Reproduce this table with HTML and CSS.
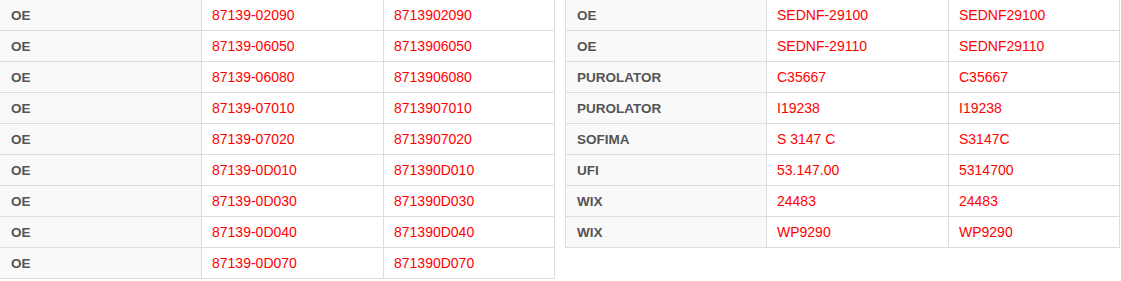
FILE: index.html
```html
<!DOCTYPE html>
<html>
<head>
<meta charset="utf-8">
<link rel="stylesheet" href="styles.css">
</head>
<body>
<div class="wrap">
  <table class="xref">
    <tr><td class="brand">OE</td><td class="num">87139-02090</td><td class="code">8713902090</td></tr>
    <tr><td class="brand">OE</td><td class="num">87139-06050</td><td class="code">8713906050</td></tr>
    <tr><td class="brand">OE</td><td class="num">87139-06080</td><td class="code">8713906080</td></tr>
    <tr><td class="brand">OE</td><td class="num">87139-07010</td><td class="code">8713907010</td></tr>
    <tr><td class="brand">OE</td><td class="num">87139-07020</td><td class="code">8713907020</td></tr>
    <tr><td class="brand">OE</td><td class="num">87139-0D010</td><td class="code">871390D010</td></tr>
    <tr><td class="brand">OE</td><td class="num">87139-0D030</td><td class="code">871390D030</td></tr>
    <tr><td class="brand">OE</td><td class="num">87139-0D040</td><td class="code">871390D040</td></tr>
    <tr><td class="brand">OE</td><td class="num">87139-0D070</td><td class="code">871390D070</td></tr>
  </table>
  <table class="xref xref-right">
    <tr><td class="brand">OE</td><td class="num">SEDNF-29100</td><td class="code">SEDNF29100</td></tr>
    <tr><td class="brand">OE</td><td class="num">SEDNF-29110</td><td class="code">SEDNF29110</td></tr>
    <tr><td class="brand">PUROLATOR</td><td class="num">C35667</td><td class="code">C35667</td></tr>
    <tr><td class="brand">PUROLATOR</td><td class="num">I19238</td><td class="code">I19238</td></tr>
    <tr><td class="brand">SOFIMA</td><td class="num">S 3147 C</td><td class="code">S3147C</td></tr>
    <tr><td class="brand">UFI</td><td class="num">53.147.00</td><td class="code">5314700</td></tr>
    <tr><td class="brand">WIX</td><td class="num">24483</td><td class="code">24483</td></tr>
    <tr><td class="brand">WIX</td><td class="num">WP9290</td><td class="code">WP9290</td></tr>
  </table>
</div>
</body>
</html>
```
FILE: styles.css
```css
html, body {
  margin: 0;
  padding: 0;
  background: #fff;
}
body {
  font-family: "Liberation Sans", Arial, sans-serif;
}
.wrap {
  display: flex;
  align-items: flex-start;
  gap: 10px;
  margin: -1px 0 0 -1px;
}
.xref {
  border-collapse: collapse;
  border: 1px solid #ddd;
}
.xref td {
  border: 1px solid #ddd;
  height: 31px;
  padding: 0 10px 0 10px;
  box-sizing: border-box;
  font-size: 14px;
  vertical-align: middle;
  white-space: nowrap;
}
.xref td.brand {
  width: 202px;
  padding-left: 11px;
  background: #f9f9f9;
  color: #555;
  font-weight: bold;
  font-size: 13.5px;
}
.xref-right td.brand {
  width: 201px;
}
.xref td.num {
  width: 182px;
  color: #ff0000;
}
.xref td.code {
  width: 171px;
  color: #ff0000;
}
```
